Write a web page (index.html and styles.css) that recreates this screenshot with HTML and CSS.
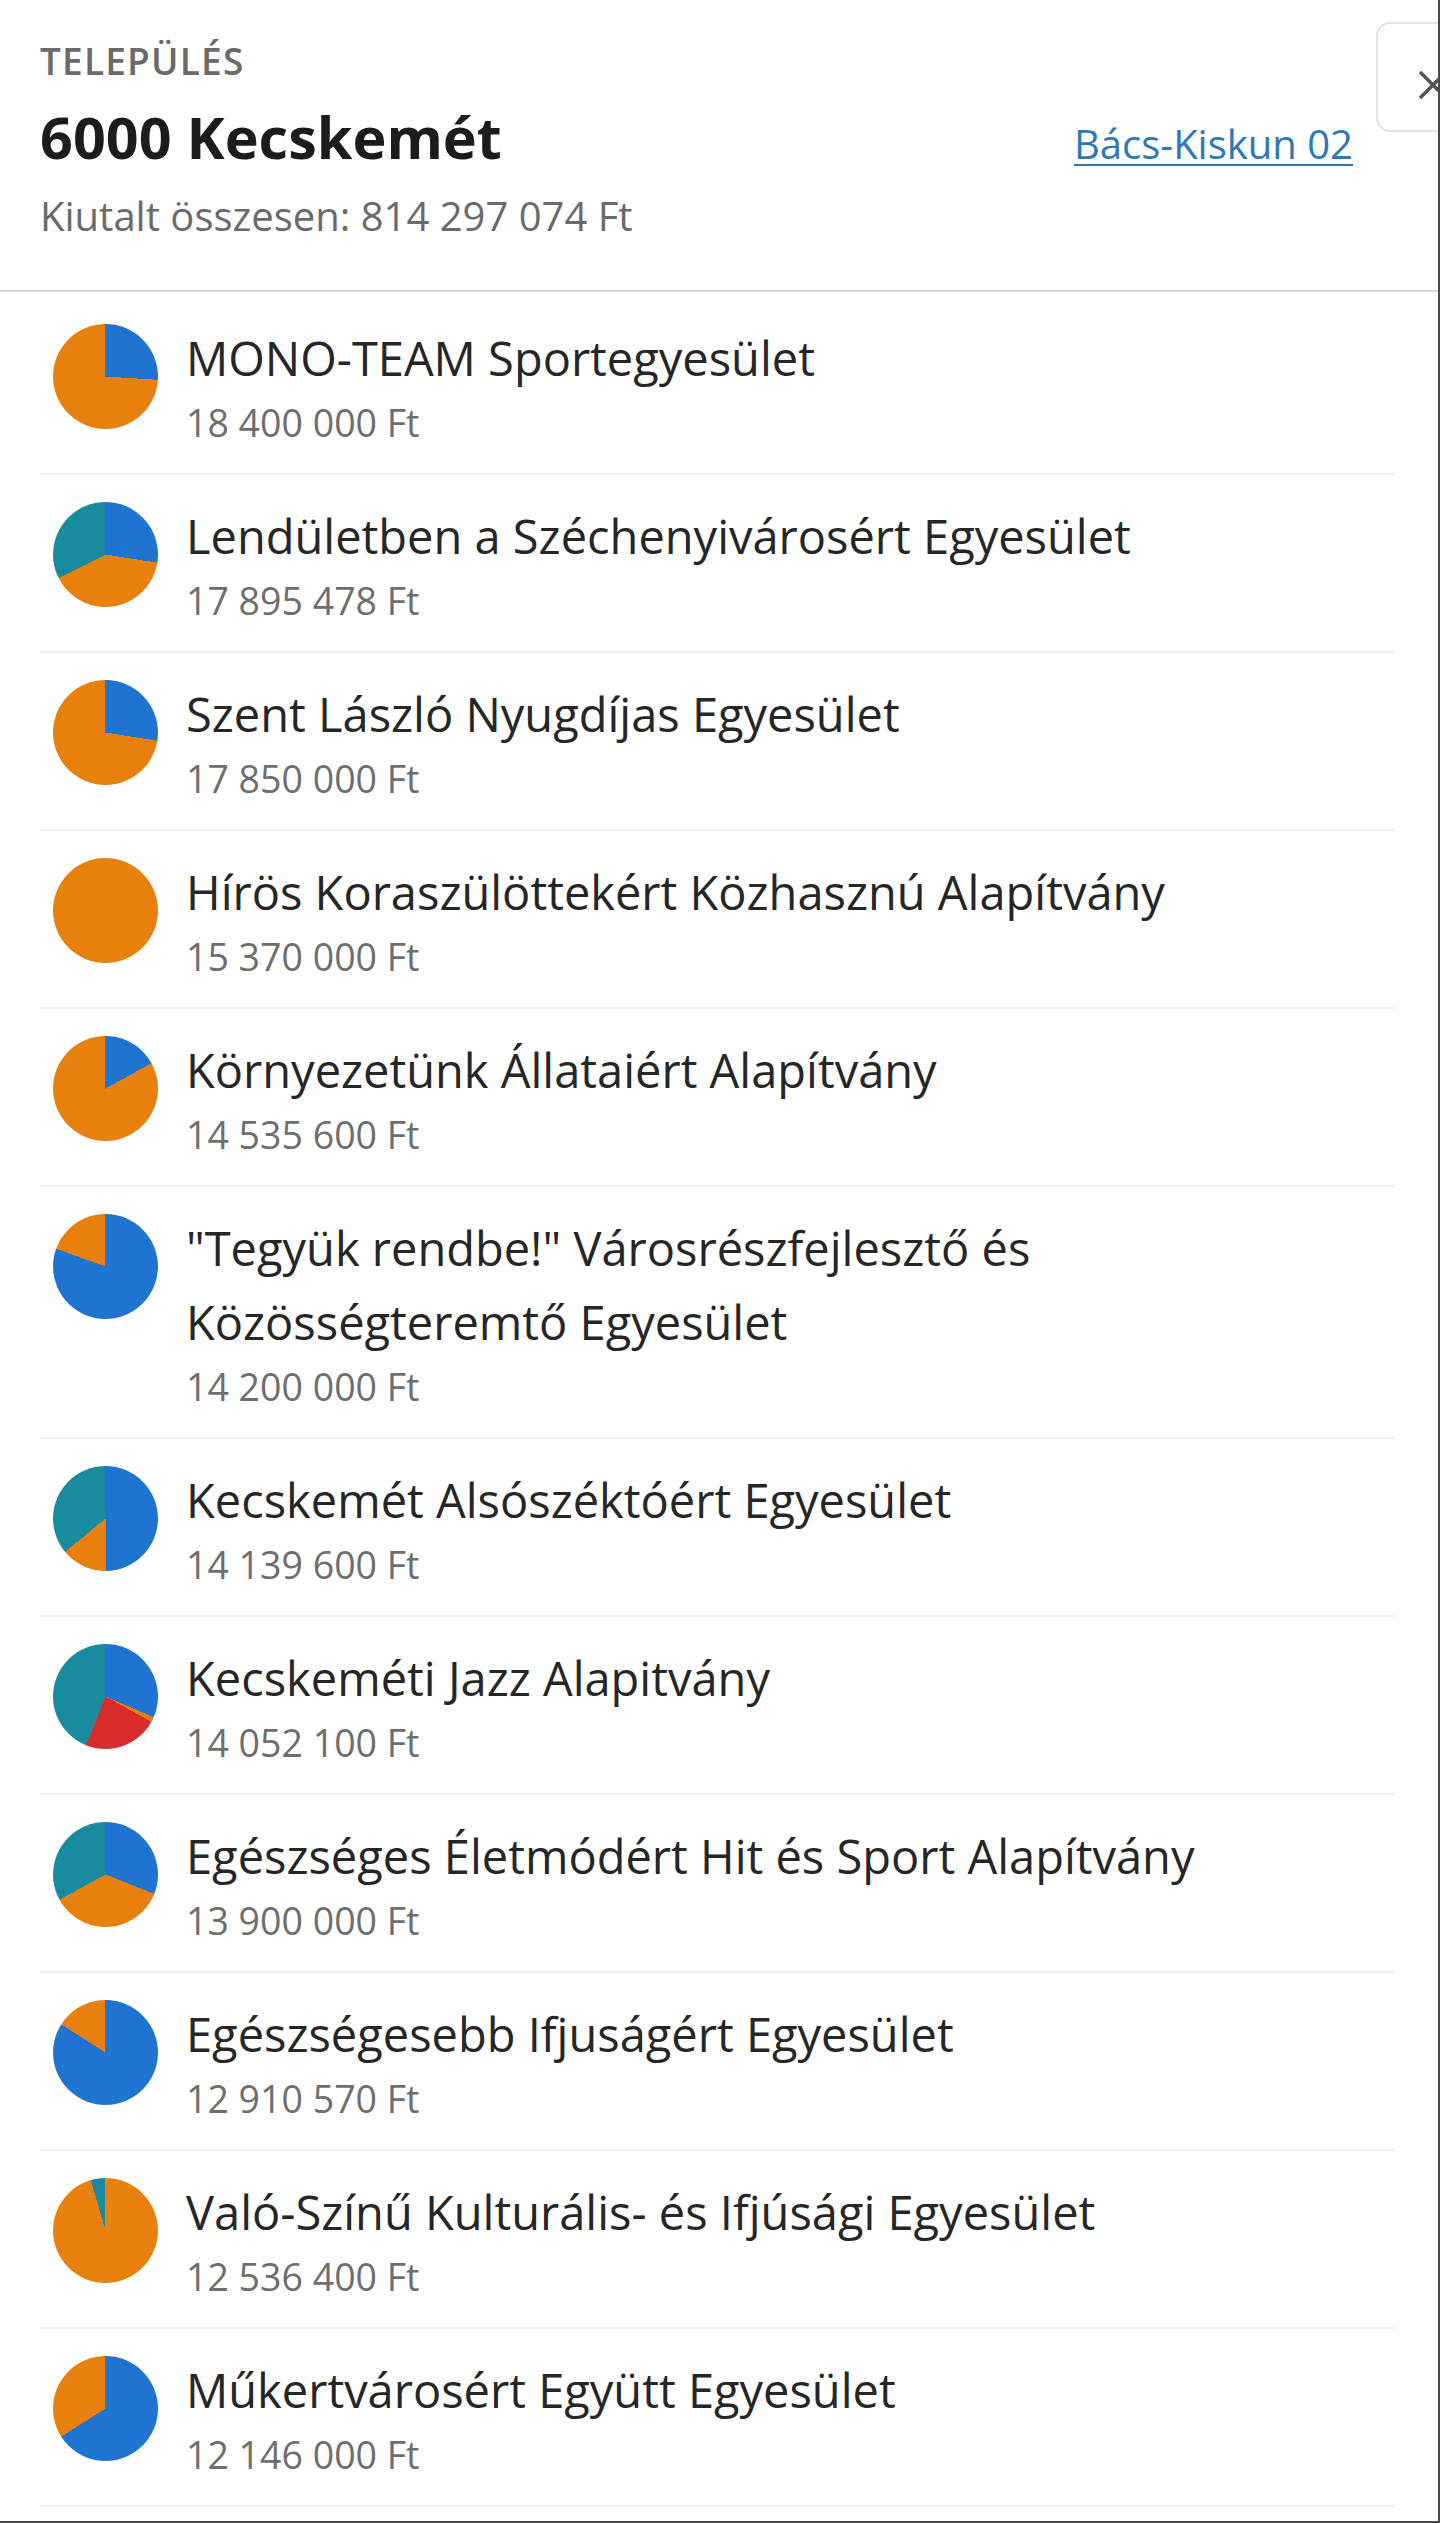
FILE: index.html
```html
<!DOCTYPE html>
<html lang="hu">
<head>
<meta charset="utf-8">
<title>Település – 6000 Kecskemét</title>
<link rel="stylesheet" href="styles.css">
</head>
<body>
<div class="panel">
  <header class="head">
    <div class="label">TELEPÜLÉS</div>
    <div class="title-row">
      <h1 class="city">6000 Kecskemét</h1>
      <a class="district" href="#">Bács-Kiskun 02</a>
    </div>
    <div class="total">Kiutalt összesen: 814 297 074 Ft</div>
    <button class="close" type="button" aria-label="Bezárás">
      <svg class="close-x" viewBox="0 0 30 30" width="30" height="30"><path d="M2 2 L28 28 M28 2 L2 28"/></svg>
    </button>
  </header>
  <ul class="list">
    <li class="row"><span class="pie" style="background: conic-gradient(#1e74d0 0 26%, #e8800e 26% 100%)"></span><div class="info"><div class="name">MONO-TEAM Sportegyesület</div><div class="amount">18 400 000 Ft</div></div></li>
    <li class="row"><span class="pie" style="background: conic-gradient(#1e74d0 0 27.5%, #e8800e 27.5% 67.5%, #188b9e 67.5% 100%)"></span><div class="info"><div class="name">Lendületben a Széchenyivárosért Egyesület</div><div class="amount">17 895 478 Ft</div></div></li>
    <li class="row"><span class="pie" style="background: conic-gradient(#1e74d0 0 27.5%, #e8800e 27.5% 100%)"></span><div class="info"><div class="name">Szent László Nyugdíjas Egyesület</div><div class="amount">17 850 000 Ft</div></div></li>
    <li class="row"><span class="pie" style="background: #e8800e"></span><div class="info"><div class="name">Hírös Koraszülöttekért Közhasznú Alapítvány</div><div class="amount">15 370 000 Ft</div></div></li>
    <li class="row"><span class="pie" style="background: conic-gradient(#1e74d0 0 17%, #e8800e 17% 100%)"></span><div class="info"><div class="name">Környezetünk Állataiért Alapítvány</div><div class="amount">14 535 600 Ft</div></div></li>
    <li class="row"><span class="pie" style="background: conic-gradient(#1e74d0 0 80.5%, #e8800e 80.5% 100%)"></span><div class="info"><div class="name">"Tegyük rendbe!" Városrészfejlesztő és Közösségteremtő Egyesület</div><div class="amount">14 200 000 Ft</div></div></li>
    <li class="row"><span class="pie" style="background: conic-gradient(#1e74d0 0 50%, #e8800e 50% 64%, #188b9e 64% 100%)"></span><div class="info"><div class="name">Kecskemét Alsószéktóért Egyesület</div><div class="amount">14 139 600 Ft</div></div></li>
    <li class="row"><span class="pie" style="background: conic-gradient(#1e74d0 0 31.5%, #e8800e 31.5% 33%, #d92b2b 33% 56%, #188b9e 56% 100%)"></span><div class="info"><div class="name">Kecskeméti Jazz Alapitvány</div><div class="amount">14 052 100 Ft</div></div></li>
    <li class="row"><span class="pie" style="background: conic-gradient(#1e74d0 0 31%, #e8800e 31% 67%, #188b9e 67% 100%)"></span><div class="info"><div class="name">Egészséges Életmódért Hit és Sport Alapítvány</div><div class="amount">13 900 000 Ft</div></div></li>
    <li class="row"><span class="pie" style="background: conic-gradient(#1e74d0 0 84%, #e8800e 84% 100%)"></span><div class="info"><div class="name">Egészségesebb Ifjuságért Egyesület</div><div class="amount">12 910 570 Ft</div></div></li>
    <li class="row"><span class="pie" style="background: conic-gradient(#e8800e 0 95.5%, #188b9e 95.5% 100%)"></span><div class="info"><div class="name">Való-Színű Kulturális- és Ifjúsági Egyesület</div><div class="amount">12 536 400 Ft</div></div></li>
    <li class="row"><span class="pie" style="background: conic-gradient(#1e74d0 0 66%, #e8800e 66% 100%)"></span><div class="info"><div class="name">Műkertvárosért Együtt Egyesület</div><div class="amount">12 146 000 Ft</div></div></li>
  </ul>
</div>
</body>
</html>
```

FILE: styles.css
```css
* { box-sizing: border-box; }

html, body {
  margin: 0;
  padding: 0;
  background: #ffffff;
}

body {
  font-family: "Open Sans", "Noto Sans", "DejaVu Sans", sans-serif;
  color: #262626;
}

.panel {
  position: relative;
  width: 1440px;
  height: 2523px;
  overflow: hidden;
  background: #ffffff;
  border-right: 2px solid #4a4a4a;
  border-bottom: 2px solid #4a4a4a;
}

/* ---------- header ---------- */
.head {
  padding: 36px 85px 46.5px 40px;
  border-bottom: 2px solid #d8d8d8;
}

.label {
  font-size: 37px;
  line-height: 50px;
  font-weight: 600;
  letter-spacing: 1.2px;
  color: #6a6a6a;
}

.title-row {
  display: flex;
  justify-content: space-between;
  align-items: baseline;
  margin-top: 11px;
}

.city {
  margin: 0;
  font-size: 57.5px;
  line-height: 80px;
  font-weight: 700;
  color: #1c1c1c;
}

.district {
  font-size: 40px;
  line-height: 1;
  color: #2e78b7;
  text-decoration: underline;
  text-decoration-thickness: 2px;
  text-underline-offset: 5px;
}

.total {
  margin-top: 10.5px;
  font-size: 40px;
  line-height: 56px;
  color: #6a6a6a;
}

.close {
  position: absolute;
  top: 22px;
  left: 1376px;
  width: 112px;
  height: 110px;
  padding: 0;
  border: 2px solid #e2e2e2;
  border-radius: 14px;
  background: #ffffff;
}

.close-x {
  position: absolute;
  left: 40px;
  top: 46px;
  stroke: #555555;
  stroke-width: 3.5;
  fill: none;
}

/* ---------- list ---------- */
.list {
  list-style: none;
  margin: 0;
  padding: 5px 43px 0 40px;
}

.row {
  display: flex;
  align-items: flex-start;
  gap: 28px;
  padding: 24px 0 22px 13px;
  border-bottom: 2px solid #f0f0f0;
}

.pie {
  flex: 0 0 105px;
  width: 105px;
  height: 105px;
  margin-top: 3px;
  border-radius: 50%;
}

.info {
  min-width: 0;
}

.name {
  font-size: 47px;
  line-height: 74px;
  color: #262626;
}

.amount {
  font-size: 37.5px;
  line-height: 56px;
  color: #6e6e6e;
}
```
